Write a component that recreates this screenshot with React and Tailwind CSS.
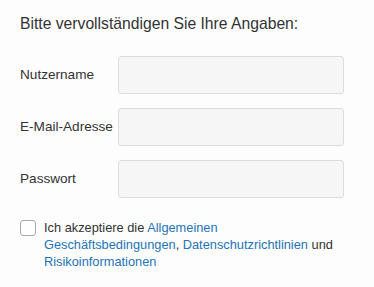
import React from 'react';

const fields = [
  { label: 'Nutzername', type: 'text' },
  { label: 'E-Mail-Adresse', type: 'email' },
  { label: 'Passwort', type: 'password' },
];

export default function App() {
  return (
    <div className="min-h-[287px] w-[374px] bg-[#fdfdfd] px-5 pt-[12px] font-['Liberation_Sans',Arial,sans-serif] text-[#333]">
      <h2 className="text-[15.7px] leading-6">Bitte vervollständigen Sie Ihre Angaben:</h2>

      <div className="mt-[20px] flex flex-col gap-[14px]">
        {fields.map((f) => (
          <div key={f.label} className="flex items-center">
            <label className="w-[98px] shrink-0 whitespace-nowrap text-[13.6px]">{f.label}</label>
            <input
              type={f.type}
              className="h-[38px] w-[226px] rounded-[3px] border border-[#ddd] bg-[#f6f6f6] px-2 text-sm outline-none"
            />
          </div>
        ))}
      </div>

      <div className="mt-[21px] flex items-start gap-2">
        <span className="mt-[1px] h-4 w-4 shrink-0 rounded-[3px] border border-[#aaa] bg-white" />
        <p className="text-[12.8px] leading-[17px]">
          Ich akzeptiere die <a className="text-[#1d74b8]">Allgemeinen Geschäftsbedingungen</a>,{' '}
          <a className="text-[#1d74b8]">Datenschutzrichtlinien</a> und{' '}
          <a className="text-[#1d74b8]">Risikoinformationen</a>
        </p>
      </div>
    </div>
  );
}
